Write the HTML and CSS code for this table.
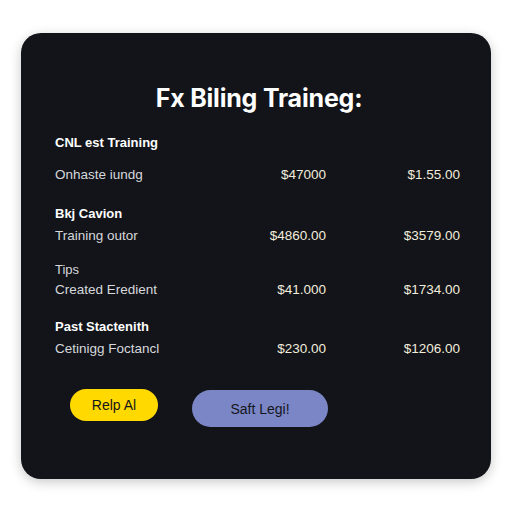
FILE: index.html
```html
<!DOCTYPE html>
<html>
<head>
<meta charset="utf-8">
<link rel="stylesheet" href="styles.css">
</head>
<body>
<div class="page">
  <div class="card">
    <h1 class="title">Fx Biling Traineg:</h1>
    <div class="list">
      <div class="head h1">CNL est Training</div>
      <div class="row r1"><span class="label">Onhaste iundg</span><span class="amt">$47000</span><span class="amt">$1.55.00</span></div>
      <div class="head h2">Bkj Cavion</div>
      <div class="row r2"><span class="label">Training outor</span><span class="amt">$4860.00</span><span class="amt">$3579.00</span></div>
      <div class="sub h3">Tips</div>
      <div class="row r3"><span class="label">Created Eredient</span><span class="amt">$41.000</span><span class="amt">$1734.00</span></div>
      <div class="head h4">Past Stactenith</div>
      <div class="row r4"><span class="label">Cetinigg Foctancl</span><span class="amt">$230.00</span><span class="amt">$1206.00</span></div>
    </div>
    <div class="actions">
      <button class="btn btn-yellow">Relp Al</button>
      <button class="btn btn-purple">Saft Legi!</button>
    </div>
  </div>
</div>
</body>
</html>
```

FILE: styles.css
```css
* { box-sizing: border-box; }
html, body { margin: 0; padding: 0; }
body {
  background: #ffffff;
  width: 512px;
  height: 512px;
  font-family: "Liberation Sans", Arial, sans-serif;
}
.page {
  padding: 33px 21px 0 21px;
}
.card {
  width: 470px;
  height: 446px;
  background: #121419;
  border-radius: 20px;
  box-shadow: 0 3px 12px rgba(0, 0, 0, 0.22);
  padding: 52px 31px 0 34px;
}
.title {
  margin: 0;
  font-family: Inter, "Liberation Sans", sans-serif;
  font-weight: 700;
  font-size: 25px;
  line-height: 26px;
  letter-spacing: -0.2px;
  color: #ffffff;
  text-align: center;
  padding-left: 3px;
}
.list {
  display: flex;
  flex-direction: column;
}
.head {
  font-weight: 700;
  font-size: 13px;
  line-height: 16px;
  color: #ffffff;
}
.sub {
  font-size: 13px;
  line-height: 16px;
  color: #d6d8dc;
}
.row {
  display: grid;
  grid-template-columns: 1fr 100px 134px;
  font-size: 13.5px;
  line-height: 16px;
  color: #d6d8dc;
}
.amt {
  text-align: right;
  color: #f1ecdc;
}
.h1 { margin-top: 24px; }
.r1 { margin-top: 16px; }
.h2 { margin-top: 23px; }
.r2 { margin-top: 6px; }
.h3 { margin-top: 18px; }
.r3 { margin-top: 4px; }
.h4 { margin-top: 21px; }
.r4 { margin-top: 6px; }
.actions {
  display: flex;
  align-items: flex-start;
  gap: 34px;
  margin-top: 32px;
  padding-left: 15px;
}
.btn {
  border: none;
  border-radius: 999px;
  font-family: "Liberation Sans", Arial, sans-serif;
  font-size: 14px;
  color: #15161c;
  padding: 0;
}
.btn-yellow {
  width: 88px;
  height: 32px;
  background: #ffd900;
}
.btn-purple {
  width: 136px;
  height: 37px;
  margin-top: 1px;
  background: #7b86c6;
}
```
